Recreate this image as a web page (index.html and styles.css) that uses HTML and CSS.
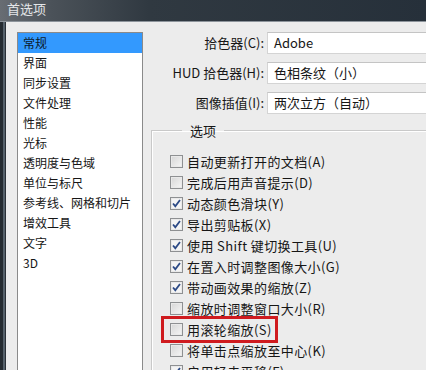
FILE: index.html
```html
<!DOCTYPE html>
<html lang="zh-CN">
<head>
    <meta charset="UTF-8">
    <meta name="viewport" content="width=device-width, initial-scale=1.0">
    <title>首选项</title>
    <link rel="stylesheet" href="styles.css">
</head>
<body>
    <div class="titlebar">首选项</div>
    <div class="frame">
        <div class="dialog">
            <ul class="navlist">
                <li class="active">常规</li>
                <li>界面</li>
                <li>同步设置</li>
                <li>文件处理</li>
                <li>性能</li>
                <li>光标</li>
                <li>透明度与色域</li>
                <li>单位与标尺</li>
                <li>参考线、网格和切片</li>
                <li>增效工具</li>
                <li>文字</li>
                <li>3D</li>
            </ul>

            <div class="pane">
                <div class="form">
                    <label>拾色器(C):</label>
                    <div class="select">Adobe</div>
                    <label>HUD 拾色器(H):</label>
                    <div class="select">色相条纹（小）</div>
                    <label>图像插值(I):</label>
                    <div class="select">两次立方（自动）</div>
                </div>

                <fieldset class="group">
                    <legend>选项</legend>
                    <div class="opt"><span class="box"></span>自动更新打开的文档(A)</div>
                    <div class="opt"><span class="box"></span>完成后用声音提示(D)</div>
                    <div class="opt"><span class="box on"></span>动态颜色滑块(Y)</div>
                    <div class="opt"><span class="box on"></span>导出剪贴板(X)</div>
                    <div class="opt"><span class="box on"></span>使用 Shift 键切换工具(U)</div>
                    <div class="opt"><span class="box on"></span>在置入时调整图像大小(G)</div>
                    <div class="opt"><span class="box on"></span>带动画效果的缩放(Z)</div>
                    <div class="opt"><span class="box"></span>缩放时调整窗口大小(R)</div>
                    <div class="opt marked"><span class="box"></span>用滚轮缩放(S)<span class="redbox"></span></div>
                    <div class="opt"><span class="box"></span>将单击点缩放至中心(K)</div>
                    <div class="opt"><span class="box on"></span>启用轻击平移(F)</div>
                </fieldset>
            </div>
        </div>
    </div>
</body>
</html>
```

FILE: styles.css
```css
html, body{
    margin: 0;
    padding: 0;
    height: 100%;
    overflow: hidden;
}

body{
    background: #2a3037;
    font-family: "Noto Sans CJK SC", "Noto Sans", sans-serif;
    color: #161616;
}

.titlebar{
    height: 21px;
    line-height: 17px;
    padding-left: 7px;
    font-size: 13px;
    color: #e4e6e9;
    background: linear-gradient(to right, #686d73 0%, #4b5259 12%, #303941 35%, #26303a 100%);
    border-bottom: 1px solid #8d949b;
}

.frame{
    height: 100%;
    padding-left: 6px;
    background: linear-gradient(to right, #252b31 0, #252b31 3px, #56616b 3px, #56616b 5px, #2a3037 5px);
}

.dialog{
    display: flex;
    width: 520px;
    height: 100%;
    padding: 10px 0 0 11px;
    background: #ececec;
}

/* category list on the left */
.navlist{
    list-style: none;
    margin: 0;
    padding: 0;
    width: 124px;
    height: 400px;
    flex-shrink: 0;
    background: #fff;
    border: 1px solid #8a8a8a;
    font-size: 12px;
}

.navlist li{
    height: 20px;
    line-height: 20px;
    padding-left: 5px;
}

.navlist li.active{
    background: #3399fe;
    color: #0c1a2a;
}

.pane{
    margin-left: 8px;
    flex: 1;
}

.form{
    display: grid;
    grid-template-columns: 113px 1fr;
    column-gap: 3px;
    row-gap: 8px;
    font-size: 13px;
}

.form label{
    text-align: right;
    line-height: 22px;
}

.select{
    height: 20px;
    line-height: 20px;
    padding-left: 6px;
    background: #fff;
    border: 1px solid #d4d4d4;
    border-top-color: #c4c4c4;
}

.group{
    margin: 7px 0 0 0;
    padding: 11px 0 0 18px;
    height: 400px;
    border: 1px solid #c9c9c9;
    box-shadow: inset 1px 1px 0 #fff, 1px 1px 0 #fff;
    font-size: 13px;
}

.group legend{
    margin-left: 12px;
    padding: 0 8px;
    font-size: 13px;
}

.opt{
    display: flex;
    align-items: center;
    height: 21px;
    letter-spacing: 0.4px;
}

.box{
    width: 11px;
    height: 11px;
    margin-right: 4px;
    border: 1px solid #8e9092;
    background: linear-gradient(135deg, #d6d6d6, #f6f6f6);
    box-shadow: inset 0 0 0 1px #e9e9e9;
    flex-shrink: 0;
}

.box.on{
    background: #f4f4f4 url("data:image/svg+xml;utf8,<svg xmlns='http://www.w3.org/2000/svg' viewBox='0 0 11 11'><path d='M2 5.5 L4.3 8.2 L9 2' fill='none' stroke='%232c4a86' stroke-width='1.8'/></svg>") no-repeat center;
}

.marked{
    position: relative;
}

/* red annotation frame */
.redbox{
    position: absolute;
    box-sizing: border-box;
    left: -9px;
    top: -3px;
    width: 117px;
    height: 27px;
    border: 3px solid #cf1b1f;
}
```
